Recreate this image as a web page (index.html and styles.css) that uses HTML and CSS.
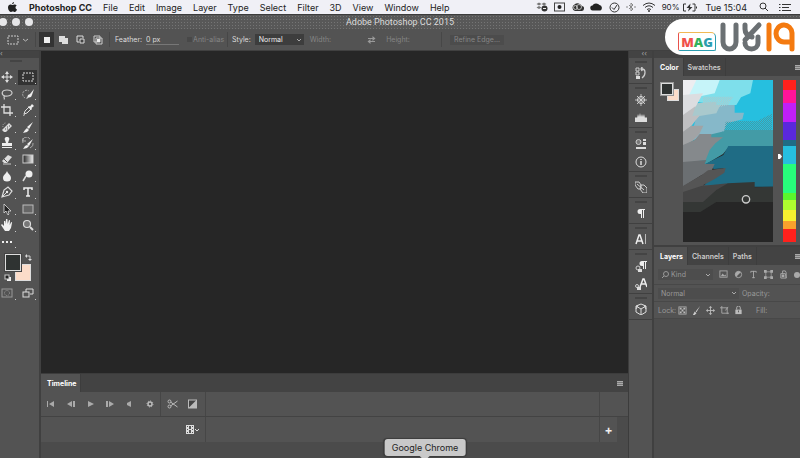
FILE: index.html
```html
<!DOCTYPE html>
<html lang="en">
<head>
    <meta charset="UTF-8">
    <meta name="viewport" content="width=device-width, initial-scale=1.0">
    <title>Adobe Photoshop CC 2015</title>
    <link rel="stylesheet" href="styles.css">
</head>
<body>
    <!-- System menu bar -->
    <header class="menubar">
        <nav class="menu">
            <a href="#" class="apple" aria-label="Apple menu"><svg width="9" height="10" viewBox="0 0 18 20"><path fill="#222" d="M12 0c0 3-2 4.500-4 4.500C8 2 10 .3 12 0zM5 5c2 0 2.500 1 4 1s2.500-1 4.500-1c1.500 0 3 .8 3.800 2-3.500 2-3 6.500.7 8-1 2.500-2.700 5-4.500 5-1.500 0-2-1-4-1s-2.500 1-4 1C3 20 0 15.500 0 11c0-4 2.500-6 5-6z"/></svg></a>
            <a href="#" class="app">Photoshop CC</a>
            <a href="#">File</a>
            <a href="#">Edit</a>
            <a href="#">Image</a>
            <a href="#">Layer</a>
            <a href="#">Type</a>
            <a href="#">Select</a>
            <a href="#">Filter</a>
            <a href="#">3D</a>
            <a href="#">View</a>
            <a href="#">Window</a>
            <a href="#">Help</a>
        </nav>
        <div class="status">
            <svg width="12" height="10" viewBox="0 0 24 20"><path fill="#777" d="M6 1l5 3-5 3-5-3zM16 1l5 3-5 3-5-3zM6 8l5 3-5 3-5-3z"/><circle cx="17" cy="13" r="6" fill="#333"/><path d="M14 13h6" stroke="#eee" stroke-width="2"/></svg>
            <svg width="11" height="10" viewBox="0 0 22 20"><rect x="1" y="2" width="20" height="16" fill="none" stroke="#444" stroke-width="2"/><circle cx="11" cy="10" r="4" fill="#222"/></svg>
            <svg width="13" height="10" viewBox="0 0 26 20"><path d="M8 18a7 7 0 0 1-1-13 9 8 0 0 1 15 3 5 5 0 0 1-2 10z" fill="#333"/><circle cx="9" cy="11" r="4" fill="none" stroke="#ddd" stroke-width="1.500"/><circle cx="16" cy="10" r="5" fill="none" stroke="#ddd" stroke-width="1.500"/></svg>
            <svg width="13" height="10" viewBox="0 0 26 20"><path d="M6 17a5 5 0 0 1-1-10 8 7 0 0 1 14-1 6 6 0 0 1 2 11z" fill="#222"/></svg>
            <svg width="11" height="11" viewBox="0 0 22 22"><circle cx="11" cy="11" r="9" fill="none" stroke="#333" stroke-width="2"/><path d="M6 11l4 4 6-9" fill="none" stroke="#333" stroke-width="2"/></svg>
            <svg width="10" height="10" viewBox="0 0 20 20"><path d="M6 6l8 8-4 4V2l4 4-8 8M2 8v4M18 8v4" fill="none" stroke="#888" stroke-width="2"/></svg>
            <svg width="14" height="10" viewBox="0 0 28 20"><path d="M2 7q12-10 24 0M6 11q8-7 16 0M10 15q4-3 8 0" fill="none" stroke="#333" stroke-width="2"/><circle cx="14" cy="18" r="2" fill="#333"/></svg>
            <span class="battery">90%<svg width="16" height="9" viewBox="0 0 32 18"><path d="M8 2H3v14h5M21 2h5v14h-5M29 7v4" fill="none" stroke="#333" stroke-width="2"/><path d="M17 1l-8 9h5l-2 7 9-9h-5z" fill="#333"/></svg></span>
            <span class="clock">Tue 15:04</span>
            <svg class="search-icon" width="10" height="10" viewBox="0 0 20 20"><circle cx="8" cy="8" r="6" fill="none" stroke="#333" stroke-width="2"/><path d="M12 12l6 6" stroke="#333" stroke-width="2"/></svg>
            <svg class="list-icon" width="12" height="9" viewBox="0 0 24 18"><path d="M0 3h3M0 9h3M0 15h3M6 3h18M6 9h14M6 15h18" stroke="#333" stroke-width="2"/></svg>
        </div>
    </header>

    <!-- Window title -->
    <div class="titlebar">
        <div class="lights"><span></span><span></span><span></span></div>
        <h1>Adobe Photoshop CC 2015</h1>
    </div>

    <!-- Tool options -->
    <form class="options">
        <div class="group tool-pick">
            <svg width="12" height="10" viewBox="0 0 12 10"><rect x="1" y="1" width="10" height="8" fill="none" stroke="#ccc" stroke-dasharray="2 1"/></svg>
            <svg width="5" height="4" viewBox="0 0 5 4"><path d="M0 1l2.500 2L5 1" fill="none" stroke="#bbb"/></svg>
        </div>
        <div class="group modes">
            <button type="button" class="active" aria-label="New selection"><svg width="10" height="10" viewBox="0 0 10 10"><rect x="2" y="2" width="6" height="6" fill="#eee"/></svg></button>
            <button type="button" aria-label="Add to selection"><svg width="10" height="10" viewBox="0 0 10 10"><path d="M0 1h6v2h3v6H3V7H0z" fill="#ddd"/></svg></button>
            <button type="button" aria-label="Subtract from selection"><svg width="10" height="10" viewBox="0 0 10 10"><path d="M3 7H1V1h6v2" fill="none" stroke="#ddd"/><path d="M4 4h4v4H4z" fill="#444" stroke="#ddd"/></svg></button>
            <button type="button" aria-label="Intersect with selection"><svg width="10" height="10" viewBox="0 0 10 10"><path d="M1 1h6v6H1zM3 3h6v6H3z" fill="none" stroke="#ccc"/><rect x="4" y="4" width="3" height="3" fill="#eee"/></svg></button>
        </div>
        <div class="group feather">
            <label for="feather">Feather:</label>
            <input type="text" id="feather" value="0 px">
            <input type="checkbox" id="alias" disabled>
            <label for="alias" class="dim">Anti-alias</label>
        </div>
        <div class="group style-group">
            <label for="style">Style:</label>
            <select id="style"><option>Normal</option><option>Fixed Ratio</option></select>
            <label for="sel-width" class="dim width-label">Width:</label>
            <input type="text" id="sel-width" class="size" disabled>
            <svg width="9" height="8" viewBox="0 0 18 16"><path d="M2 5h11M16 11H5" stroke="#999" stroke-width="2"/><path d="M11 0l6 5-6 5zM7 6l-6 5 6 5z" fill="#999"/></svg>
            <label for="sel-height" class="dim height-label">Height:</label>
            <input type="text" id="sel-height" class="size last" disabled>
        </div>
        <button type="button" class="refine" disabled>Refine Edge...</button>
    </form>

    <!-- Site logo over the top right corner -->
    <div class="logo">
        <span class="mag"><b class="m">M</b><b class="a">A</b><b class="g">G</b></span>
        <svg width="84" height="36" viewBox="0 0 84 36" fill="none" stroke-width="5" stroke-linecap="round">
            <path stroke="#6b7073" d="M7 6v17a6.500 7 0 0 0 13 0V6"/>
            <path stroke="#6b7073" d="M29 6v4q0 6 7 8M29 24a6.500 6 0 0 0 13 0v-6M43 6L29 21"/>
            <path stroke="#f47a10" d="M53 6v24M76 30V14a8 8.500 0 1 0-8 9h6"/>
        </svg>
    </div>

    <main class="workspace">
        <!-- Toolbox -->
        <aside class="toolbox">
            <div class="strip">‹</div>
            <div class="grip"></div>
            <div class="tools">
                <button aria-label="Move"><svg viewBox="0 0 12 12"><path d="M6 1v10M1 6h10" stroke="#ddd"/><path d="M6 0l2 3H4zM6 12l2-3H4zM0 6l3-2v4zM12 6L9 4v4z" fill="#ddd"/></svg></button>
                <button class="active" aria-label="Marquee"><svg viewBox="0 0 12 12"><rect x="1" y="2" width="10" height="8" fill="none" stroke="#ddd" stroke-dasharray="2 1"/></svg></button>
                <button aria-label="Lasso"><svg viewBox="0 0 12 12"><path d="M4 8C0 7 0 2 6 2s7 5 1 6c-2 .4-4-.5-4 1s1 1 0 2.500" fill="none" stroke="#ccc" stroke-width="1.200"/></svg></button>
                <button aria-label="Quick selection"><svg viewBox="0 0 12 12"><path d="M6 10A4 4 0 1 1 7 3" fill="none" stroke="#aaa" stroke-dasharray="2 1"/><path d="M12 1L8 6 6 7l-1 3 4-1 1-2z" fill="#eee"/></svg></button>
                <button aria-label="Crop"><svg viewBox="0 0 12 12"><path d="M3 0v9h9M0 3h9v9" fill="none" stroke="#ddd" stroke-width="1.300"/></svg></button>
                <button aria-label="Eyedropper"><svg viewBox="0 0 12 12"><path d="M2 10l1-3 4-4 2 2-4 4z" fill="none" stroke="#ddd"/><path d="M6 3l3 3 1-1-.5-1L12 2 10 0 8 2.500 7 2zM1 12l1-2 1 1z" fill="#eee"/></svg></button>
                <button aria-label="Healing brush"><svg viewBox="0 0 12 12"><path d="M3 11L1 9l7-7 3 3-6 6z" fill="#ddd"/><path d="M4 8h1M6 6h1M6 8h1M8 5h1" stroke="#555"/><path d="M2 6a3 3 0 0 1 3-4" fill="none" stroke="#aaa" stroke-dasharray="1"/></svg></button>
                <button aria-label="Brush"><svg viewBox="0 0 12 12"><path d="M11 1L7 8 5 6zM5 7l2 2-2 2-4 1 2-3z" fill="#eee"/></svg></button>
                <button aria-label="Clone stamp"><svg viewBox="0 0 12 12"><path d="M6 0a2 2 0 0 1 2 3L7 6h4v3H1V6h4L4 3a2 2 0 0 1 2-3zM1 10h10v1H1z" fill="#eee"/></svg></button>
                <button aria-label="History brush"><svg viewBox="0 0 12 12"><path d="M11 2L7 9 5 7zM5 8l2 1-2 2-4 1 2-3z" fill="#eee"/><path d="M1 6a4 4 0 0 1 7-4M1 1v3h3M11 6q1 3-3 5" fill="none" stroke="#aaa"/></svg></button>
                <button aria-label="Eraser"><svg viewBox="0 0 12 12"><path d="M1 8l6-6 4 2-5 6H3z" fill="#ddd"/><path d="M3 6l3 3M1 11h10" stroke="#555"/><path d="M2 11h8" stroke="#ccc"/></svg></button>
                <button aria-label="Gradient"><svg viewBox="0 0 12 12"><defs><linearGradient id="grad"><stop stop-color="#222"/><stop offset="1" stop-color="#eee"/></linearGradient></defs><rect x="1" y="2" width="10" height="8" fill="url(#grad)" stroke="#ccc"/></svg></button>
                <button aria-label="Blur"><svg viewBox="0 0 12 12"><path d="M6 1c1 3 4 4 4 7a4 3.500 0 0 1-8 0c0-3 3-4 4-7z" fill="#eee"/></svg></button>
                <button aria-label="Dodge"><svg viewBox="0 0 12 12"><circle cx="7" cy="4" r="3.500" fill="#eee"/><path d="M4 6l-3 5" stroke="#ddd" stroke-width="1.500"/></svg></button>
                <button aria-label="Pen"><svg viewBox="0 0 12 12"><path d="M1 11l2-7 4-3 4 4-3 4z" fill="none" stroke="#ddd" stroke-width="1.200"/><path d="M1 11l5-5" stroke="#ddd"/><circle cx="6" cy="6" r="1.200" fill="#eee"/></svg></button>
                <button aria-label="Type"><svg viewBox="0 0 12 12"><path d="M2 4V2h8v2M6 2v8M4 10h4" fill="none" stroke="#eee" stroke-width="1.500"/></svg></button>
                <button aria-label="Path selection"><svg viewBox="0 0 12 12"><path d="M3 1v9l2-2 2 4 1-1-1-3h3z" fill="#222" stroke="#ddd" stroke-width=".8"/></svg></button>
                <button aria-label="Rectangle"><svg viewBox="0 0 12 12"><rect x="1" y="2" width="10" height="8" fill="#666" stroke="#bbb"/></svg></button>
                <button aria-label="Hand"><svg viewBox="0 0 12 12"><path d="M4 12L0 6l1-1 2 2V2h1.200l.5 3L5 0h1.400l.3 5L8 1l1 .3L8.700 6l1.500-3 .9.400L10 9l-2 3z" fill="#eee"/></svg></button>
                <button aria-label="Zoom"><svg viewBox="0 0 12 12"><circle cx="5" cy="5" r="3.500" fill="#777" stroke="#ddd" stroke-width="1.200"/><path d="M8 8l3 3" stroke="#ddd" stroke-width="2"/></svg></button>
                <button aria-label="More tools"><svg viewBox="0 0 12 12"><path d="M1 6h2M5 6h2M9 6h2" stroke="#eee" stroke-width="2"/></svg></button>
            </div>
            <div class="tool-colors">
                <button class="bg" aria-label="Background colour"></button>
                <button class="fg" aria-label="Foreground colour"></button>
                <svg class="swap" width="7" height="7" viewBox="0 0 7 7"><path d="M1 2h4v4" fill="none" stroke="#ccc"/><path d="M0 2l2-2v4zM5 7L3 5h4z" fill="#ddd"/></svg>
                <svg class="reset" width="7" height="7" viewBox="0 0 7 7"><rect x="3" y="3" width="4" height="4" fill="#eee"/><rect x="1" y="1" width="4" height="4" fill="#222" stroke="#ccc"/></svg>
            </div>
            <div class="tools modes-row">
                <button aria-label="Quick mask"><svg viewBox="0 0 12 12"><rect x="1" y="2" width="10" height="8" fill="none" stroke="#999"/><circle cx="6" cy="6" r="2.500" fill="none" stroke="#999" stroke-dasharray="1"/></svg></button>
                <button aria-label="Screen mode"><svg viewBox="0 0 12 12"><path d="M4 5V2h7v5H8" fill="none" stroke="#ddd"/><rect x="1" y="5" width="6" height="5" fill="#555" stroke="#ddd"/></svg></button>
            </div>
        </aside>

        <section class="center">
            <div class="canvas"></div>
            <!-- Timeline -->
            <div class="timeline">
                <div class="tabs">
                    <button class="tab active">Timeline</button>
                    <span class="burger"></span>
                </div>
                <div class="track controls">
                    <div class="playback">
                        <button aria-label="First frame"><svg viewBox="0 0 10 8"><path d="M1 1h1v6H1zM8 1v6L3 4z"/></svg></button>
                        <button aria-label="Previous frame"><svg viewBox="0 0 10 8"><path d="M6 1v6L1 4zM7 1h2v6H7z"/></svg></button>
                        <button aria-label="Play"><svg viewBox="0 0 10 8"><path d="M2 1v6l6-3z"/></svg></button>
                        <button aria-label="Next frame"><svg viewBox="0 0 10 8"><path d="M4 1v6l5-3zM1 1h2v6H1z"/></svg></button>
                        <button aria-label="Mute"><svg viewBox="0 0 10 8"><path d="M2 3l4-2v6L2 5z"/></svg></button>
                        <button aria-label="Settings"><svg viewBox="0 0 10 8"><circle cx="5" cy="4" r="2" fill="none" stroke="#bbb" stroke-width="1.500"/><circle cx="5" cy="4" r="3" fill="none" stroke="#bbb" stroke-dasharray="1 1.300"/></svg></button>
                    </div>
                    <div class="edit">
                        <button aria-label="Split"><svg class="big" viewBox="0 0 10 10"><path d="M3 3l7 5M3 7l7-5" stroke="#bbb"/><circle cx="2" cy="2.500" r="1.500" fill="none" stroke="#bbb"/><circle cx="2" cy="7.500" r="1.500" fill="none" stroke="#bbb"/></svg></button>
                        <button aria-label="Transition"><svg class="big" viewBox="0 0 10 10"><rect x="1" y="1" width="8" height="8" fill="#444" stroke="#bbb"/><path d="M9 1v8H1z"/></svg></button>
                    </div>
                    <div class="rest"></div>
                    <div class="end"></div>
                </div>
                <div class="track media">
                    <div class="head">
                        <button aria-label="Add media"><svg width="13" height="9" viewBox="0 0 13 9"><path d="M0 0h8v9H0z" fill="#ddd"/><path d="M3 1h2v3H3zM3 5h2v3H3zM1 1h1v1H1zM1 4h1v1H1zM1 7h1v1H1zM6 1h1v1H6zM6 4h1v1H6zM6 7h1v1H6z" fill="#555"/><path d="M9 4l2 2 2-2" fill="none" stroke="#ddd"/></svg></button>
                    </div>
                    <div class="rest"></div>
                    <div class="end"><button aria-label="Add track">+</button></div>
                </div>
                <div class="foot"></div>
            </div>
        </section>

        <!-- Collapsed panels -->
        <aside class="dock">
            <div class="strip">‹‹</div>
            <div class="cell"><button aria-label="History"><svg viewBox="0 0 12 12"><path d="M1 1h3v3H1zM1 5h3v3H1z" fill="none" stroke="#ccc"/><path d="M1 9h4v3H1z" fill="#ddd"/><path d="M7 2c4 0 4 6 0 9M7 0v4l-1-2z" fill="none" stroke="#ccc" stroke-width="1.300"/></svg></button></div>
            <div class="cell two">
                <button aria-label="Navigator"><svg viewBox="0 0 12 12"><circle cx="6" cy="6" r="3.500" fill="none" stroke="#ddd"/><path d="M6 0v12M0 6h12M2 2l8 8M10 2l-8 8" stroke="#ddd" stroke-width=".8"/></svg></button>
                <button aria-label="Histogram"><svg viewBox="0 0 12 12"><path d="M0 10V6l1-1 1 1 1-4 1 3 1-4 1 4 1-3 1 3 1-3 1 4 1-1 1 1v4z" fill="#ddd"/></svg></button>
            </div>
            <div class="cell two">
                <button aria-label="Properties"><svg viewBox="0 0 12 12"><circle cx="3.500" cy="4" r="2.500" fill="#777" stroke="#ccc"/><path d="M8 1h3v2H8zM8 4h3v3H8zM1 9h10v2H1z" fill="#ddd"/></svg></button>
                <button aria-label="Info"><svg viewBox="0 0 12 12"><circle cx="6" cy="6" r="5" fill="none" stroke="#ddd"/><path d="M6 5v4M6 3v1" stroke="#ddd" stroke-width="1.500"/></svg></button>
            </div>
            <div class="cell"><button aria-label="Clone source"><svg viewBox="0 0 12 12"><path d="M0 1h4l2 3v4H3L0 4zM6 4h3l3 3v5H8L5 8z" fill="none" stroke="#ccc"/><path d="M2 3l7 6" stroke="#ccc"/></svg></button></div>
            <div class="cell"><button aria-label="Paragraph"><svg viewBox="0 0 12 12"><path d="M10 2H5a2.500 2.500 0 0 0 0 5h1v4h1V3h1v8h1V3h1z" fill="#eee"/></svg></button></div>
            <div class="cell"><button aria-label="Character"><svg viewBox="0 0 12 12"><path d="M1 11l3-9h1l3 9M2.500 8h4" fill="none" stroke="#eee" stroke-width="1.500"/><path d="M10.500 1v10" stroke="#bbb"/></svg></button></div>
            <div class="cell two">
                <button aria-label="Paragraph styles"><svg viewBox="0 0 12 12"><path d="M12 1H7a2.500 2.500 0 0 0 0 5h1v3h1V2h1v7h1V2h1z" fill="#eee"/><circle cx="3" cy="8" r="2" fill="none" stroke="#ccc"/><path d="M3 9h4v3H3z" fill="#ddd"/></svg></button>
                <button aria-label="Character styles"><svg viewBox="0 0 12 12"><path d="M5 9l3-8h1l3 8M6.500 6h4" fill="none" stroke="#eee" stroke-width="1.500"/><circle cx="2" cy="8" r="1.500" fill="none" stroke="#ccc"/><path d="M2 9h4v3H2z" fill="#ddd"/></svg></button>
            </div>
            <div class="cell"><button aria-label="3D"><svg viewBox="0 0 12 12"><path d="M6 1l5 2v6l-5 3-5-3V3zM1 3l5 3 5-3M6 6v6M1 6l2-4M11 6L9 2" fill="none" stroke="#ddd"/></svg></button></div>
        </aside>

        <aside class="panels">
            <div class="strip"></div>
            <section class="color-panel">
                <div class="tabs">
                    <button class="tab active">Color</button>
                    <button class="tab">Swatches</button>
                    <span class="burger"></span>
                </div>
                <div class="picker">
                    <div class="swatches">
                        <button class="bg" aria-label="Background colour"></button>
                        <button class="fg" aria-label="Foreground colour"></button>
                    </div>
                    <svg class="field" viewBox="0 0 270 486" preserveAspectRatio="none">
                        <defs>
                            <pattern id="dither" width="6" height="6" patternUnits="userSpaceOnUse"><path d="M0 0h3v3H0zM3 3h3v3H3z" fill="#439ba6"/></pattern>
                            <pattern id="dither-light" width="6" height="6" patternUnits="userSpaceOnUse"><path d="M0 0h3v3H0zM3 3h3v3H3z" fill="#a9c9cd"/></pattern>
                        </defs>
                        <path fill="#262626" d="M0 0h270v486H0z"/>
                        <path fill="#26bfdf" d="M0 0h270v200H0z"/>
                        <path fill="#439ba6" d="M0 150h270v48H140l-20 24-50 30H0z"/>
                        <path fill="url(#dither)" d="M132 123h90l45-22v50H110z"/>
                        <path fill="#7edfeb" d="M90 0h120l-8 40-28 12-14 23h-60l-60-10z"/>
                        <path fill="#86b8c9" d="M50 75h105v23h28l-5 20-45 12-10 24-43 10-60 20z"/>
                        <path fill="url(#dither)" d="M128 125h32l-20 50-22 10-30-15 36-18z"/>
                        <path fill="#c6f4f9" d="M35 0h75L95 40 45 50 0 60z"/>
                        <path fill="#a9c9cd" d="M40 70l60-5v10h12l-12 25-50 8-40 30z"/>
                        <path fill="url(#dither-light)" d="M60 50h90l-15 25-75 18z"/>
                        <path fill="#ededf0" d="M0 0h40L20 42 0 60z"/>
                        <path fill="#dcdde0" d="M0 45l60-5-22 40L0 112z"/>
                        <path fill="#bfbfc1" d="M0 105l38-27-10 30 22-2-25 32L0 160z"/>
                        <path fill="#a1a3a5" d="M0 155l25-18h36l-12 25-20 20-29 18z"/>
                        <path fill="#85898c" d="M0 195l35-15 15-18h35v10h35l-23 18-17 20-12 30-68 10z"/>
                        <path fill="#1f6c85" d="M136 198h134v122H60l18-20 45-35-30 2-27-15 55-27z"/>
                        <path fill="#6b6f72" d="M0 246l70-6-5 12h30l-10 22-30 12-55 34z"/>
                        <path fill="#555" d="M0 318l55-32 20-15 53-7-4 14-30 20-34 18 65 2-85 22-40 20z"/>
                        <path fill="#454545" d="M0 336l55-18 80-8-20 28-45 28H0z"/>
                        <path fill="#343735" d="M0 366h60l40-36 35-20 80-4v16l55-2v46H100l-48 30H0z"/>
                        <circle cx="189" cy="358" r="11" fill="none" stroke="#ccc" stroke-width="4"/>
                    </svg>
                    <svg class="marker" width="4" height="5" viewBox="0 0 4 5"><path d="M0 0h2l2 2.500L2 5H0z" fill="#fff"/></svg>
                    <input type="range" class="hue" min="0" max="100" value="53" aria-label="Hue">
                </div>
            </section>
            <section class="layers">
                <div class="tabs">
                    <button class="tab active">Layers</button>
                    <button class="tab">Channels</button>
                    <button class="tab">Paths</button>
                    <span class="burger"></span>
                </div>
                <div class="row filter-row">
                    <span class="kind-wrap">
                        <svg width="7" height="7" viewBox="0 0 7 7"><circle cx="4" cy="3" r="2.500" fill="none" stroke="#999"/><path d="M2 5L0 7" stroke="#999"/></svg>
                        <select aria-label="Filter" disabled><option>Kind</option></select>
                    </span>
                    <svg class="ico" viewBox="0 0 10 10"><rect x="1" y="1" width="8" height="7" fill="none" stroke="#aaa"/><path d="M2 7l2-3 2 2 1-1 1 2z" fill="#aaa"/></svg>
                    <svg class="ico" viewBox="0 0 10 10"><circle cx="5" cy="5" r="3.500" fill="none" stroke="#aaa"/><path d="M7.500 2.500a3.500 3.500 0 1 0-5 5z" fill="#aaa"/></svg>
                    <svg class="ico" viewBox="0 0 10 10"><path d="M2 3V1.500h6V3M5 1v8M3.500 8.500h3" fill="none" stroke="#aaa"/></svg>
                    <svg class="ico" viewBox="0 0 10 10"><path d="M2 2h6v6H2z" fill="none" stroke="#999"/><path d="M0 0h3v3H0zM7 0h3v3H7zM0 7h3v3H0zM7 7h3v3H7z" fill="#aaa"/></svg>
                    <svg class="ico" viewBox="0 0 10 10"><path d="M2 4h5l1 5H2zM4 4V1h3l1 2v6" fill="none" stroke="#aaa"/><path d="M3 5h3v3H3z" fill="#aaa"/></svg>
                    <span class="toggle"></span>
                </div>
                <div class="row blend-row">
                    <select aria-label="Blend mode" disabled><option>Normal</option></select>
                    <label for="opacity">Opacity:</label>
                    <input type="text" id="opacity" disabled>
                </div>
                <div class="row lock-row">
                    <span>Lock:</span>
                    <svg class="ico" viewBox="0 0 10 10"><rect x="1" y="1" width="8" height="8" fill="none" stroke="#aaa"/><path d="M2 2h2v2H2zM6 2h2v2H6zM4 4h2v2H4zM2 6h2v2H2zM6 6h2v2H6z" fill="#bbb"/></svg>
                    <svg class="ico" viewBox="0 0 10 10"><path d="M9 0L5 7 4 6zM3 6l2 2-2 2H1z" fill="#ccc"/></svg>
                    <svg class="ico" viewBox="0 0 10 10"><path d="M5 1v8M1 5h8" stroke="#bbb"/><path d="M5 0l2 2H3zM5 10l2-2H3zM0 5l2-2v4zM10 5L8 3v4z" fill="#bbb"/></svg>
                    <svg class="ico" viewBox="0 0 10 10"><path d="M0 2h8v7M2 0v8h8M6 5l3-4" fill="none" stroke="#aaa"/></svg>
                    <svg class="ico" viewBox="0 0 10 10"><path d="M3 4V2a2 2 0 0 1 4 0v2" fill="none" stroke="#bbb"/><path d="M1.500 4h7v5h-7z" fill="#bbb"/><path d="M5 5v2" stroke="#555"/></svg>
                    <label for="fill">Fill:</label>
                    <input type="text" id="fill" disabled>
                </div>
                <div class="layer-list"></div>
            </section>
        </aside>
    </main>

    <div class="tooltip" role="tooltip">Google Chrome</div>
</body>
</html>
```
FILE: styles.css
```css
* {
    box-sizing: border-box;
}
body {
    margin: 0;
    height: 100vh;
    display: flex;
    flex-direction: column;
    overflow: hidden;
    position: relative;
    background: #535353;
    color: #ddd;
    font-family: Inter, "Liberation Sans", sans-serif;
    font-size: 7px;
}
button, input, select {
    font: inherit;
    color: inherit;
    background: none;
    border: none;
    padding: 0;
    margin: 0;
    border-radius: 0;
}
button {
    display: flex;
    align-items: center;
    justify-content: center;
}
svg {
    display: block;
    flex: none;
}

/* Menu bar */
.menubar {
    height: 14px;
    flex: none;
    display: flex;
    align-items: center;
    justify-content: space-between;
    padding: 0 9px 0 8px;
    background: #f0f0f6;
    color: #222;
    font-size: 9px;
    white-space: nowrap;
}
.menu, .status {
    display: flex;
    align-items: center;
}
.menu {
    gap: 11px;
}
.menu a {
    color: inherit;
    text-decoration: none;
}
.menu .app {
    font-weight: 700;
    margin-left: 1px;
}
.status {
    gap: 6px;
}
.battery {
    display: flex;
    align-items: center;
    gap: 2px;
    font-size: 8px;
}
.clock {
    margin-left: 2px;
}
.search-icon {
    margin-left: 6px;
}
.list-icon {
    margin-left: 4px;
}

/* Title bar */
.titlebar {
    height: 15px;
    flex: none;
    display: grid;
    grid-template-columns: 1fr auto 1fr;
    align-items: center;
    border-top: 1px solid #3c3c3c;
    background: #5c5c5c radial-gradient(circle, #757575 1px, #585858 1px) 0 0 / 3px 3px;
}
.titlebar h1 {
    margin: 0;
    font-family: Roboto, sans-serif;
    font-size: 9px;
    font-weight: 400;
    color: #dcdcdc;
}
.lights {
    display: flex;
    gap: 5px;
}
.lights span {
    width: 8px;
    height: 8px;
    border-radius: 50%;
    background: #e6e6e8;
}
.lights span:first-child {
    margin-left: -1px;
}

/* Options bar */
.options {
    height: 22px;
    flex: none;
    display: flex;
    align-items: center;
    margin: 0;
    border-bottom: 1px solid #404040;
    background: #535353;
    white-space: nowrap;
}
.group {
    display: flex;
    align-items: center;
    height: 15px;
    border-right: 1px solid #474747;
}
.tool-pick {
    width: 36px;
    gap: 4px;
    padding-left: 7px;
}
.modes {
    width: 74px;
    gap: 2px;
    padding-left: 3px;
}
.modes button {
    width: 15px;
    height: 15px;
}
.modes .active {
    background: #333;
}
.feather {
    width: 118px;
    gap: 4px;
    padding-left: 5px;
}
#feather {
    width: 33px;
    border-bottom: 1px solid #777;
}
#alias {
    appearance: none;
    width: 5px;
    height: 5px;
    margin-left: 4px;
    background: #484848;
}
.feather .dim {
    margin-left: -3px;
}
.dim {
    color: #858585;
}
.style-group {
    width: 214px;
    gap: 4px;
    padding-left: 4px;
}
#style {
    width: 49px;
    height: 11px;
    padding-left: 4px;
    color: #eee;
}
select {
    appearance: none;
    background: #3d3d3d url("data:image/svg+xml,%3Csvg xmlns='http://www.w3.org/2000/svg' width='6' height='4'%3E%3Cpath d='M1 1l2 2 2-2' fill='none' stroke='%23aaa'/%3E%3C/svg%3E") no-repeat right 2px center;
}
.width-label {
    margin-left: 2px;
}
.size {
    width: 28px;
}
.height-label {
    margin-left: 6px;
}
.last {
    width: 20px;
}
.refine {
    width: 54px;
    height: 10px;
    margin-left: 8px;
    background: #4c4c4c;
    color: #868686;
}

/* Logo */
.logo {
    position: absolute;
    top: 19px;
    right: 0;
    z-index: 2;
    width: 135px;
    height: 36px;
    display: flex;
    align-items: center;
    padding-left: 13px;
    border-radius: 18px 0 0 18px;
    background: #fff;
}
.mag {
    width: 38px;
    height: 19px;
    margin-top: 9px;
    display: flex;
    align-items: center;
    justify-content: center;
    border: 1px solid #2b9db0;
    border-top-color: #f1b955;
    border-left-color: #e8524c;
    border-radius: 2px 5px 2px 2px;
    font: 700 13px "Open Sans", sans-serif;
}
.m { color: #f0514b; }
.a { color: #32b15c; }
.g { color: #2b9db0; }

/* Workspace */
.workspace {
    flex: 1;
    min-height: 0;
    display: flex;
}
.strip {
    height: 7px;
    flex: none;
    background: #434343;
    color: #aaa;
    font-size: 7px;
    line-height: 6px;
}
.toolbox {
    width: 41px;
    flex: none;
    display: flex;
    flex-direction: column;
    border-right: 2px solid #404040;
    background: #535353;
}
.grip {
    width: 12px;
    height: 2px;
    margin: 2px auto 0 10px;
    background: #444;
}
.tools {
    height: 181px;
    margin-top: 7px;
    display: grid;
    grid-template-columns: 17px 19px;
    grid-auto-rows: 1fr;
    align-items: center;
    column-gap: 1px;
}
.tools button {
    height: 15px;
    position: relative;
}
.tools button:nth-child(odd) {
    padding-right: 4px;
}
.tools button:after {
    content: "";
    position: absolute;
    right: 1px;
    bottom: 1px;
    width: 1px;
    height: 1px;
    background: #ccc;
}
.tools .active {
    background: #333;
}
.tools svg {
    width: 12px;
    height: 12px;
}
.tool-colors {
    position: relative;
    height: 30px;
    margin-top: 3px;
}
.fg, .bg {
    position: absolute;
    width: 16px;
    height: 17px;
    border: 1px solid #ddd;
}
.fg {
    top: 1px;
    left: 5px;
    background: #2f3332;
    outline: 1px solid #444;
}
.bg {
    top: 11px;
    left: 15px;
    background: #fbdcc9;
}
.swap {
    position: absolute;
    top: 1px;
    left: 25px;
}
.reset {
    position: absolute;
    top: 21px;
    left: 4px;
}
.modes-row {
    height: 16px;
    margin-top: 2px;
}

/* Canvas and timeline */
.center {
    flex: 1;
    min-width: 0;
    display: flex;
    flex-direction: column;
}
.canvas {
    flex: 1;
    background: #262626;
}
.tabs {
    height: 18px;
    flex: none;
    display: flex;
    background: #434343;
}
.tab {
    padding: 0 4px;
    border-right: 1px solid #3d3d3d;
    color: #ccc;
    font-weight: 600;
}
.tab.active {
    padding: 0 4px 0 6px;
    background: #535353;
    color: #fff;
    font-weight: 700;
}
.burger {
    width: 6px;
    height: 5px;
    margin: 7px 5px auto auto;
    border-top: 1px solid #aaa;
    border-bottom: 1px solid #aaa;
    background: linear-gradient(#777 1px, #aaa 1px, #aaa 2px, #777 2px);
}
.timeline {
    flex: none;
    height: 85px;
    display: flex;
    flex-direction: column;
    border-top: 1px solid #3c3c3c;
    background: #4b4b4b;
}
.track {
    display: flex;
    height: 25px;
    border-bottom: 1px solid #434343;
    background: #535353;
}
.playback, .edit, .head {
    display: flex;
    align-items: center;
    border-right: 1px solid #464646;
}
.playback {
    width: 120px;
}
.playback button {
    width: 20px;
}
.playback svg {
    width: 10px;
    height: 8px;
    fill: #aaa;
}
.edit {
    width: 45px;
    gap: 9px;
    padding-left: 6px;
}
.big {
    width: 11px;
    height: 10px;
    fill: #bbb;
}
.head {
    width: 165px;
    justify-content: flex-end;
    padding-right: 6px;
}
.rest {
    flex: 1;
}
.end {
    width: 29px;
    border-left: 1px solid #464646;
}
.media .end {
    width: 18px;
    display: flex;
    align-items: center;
    justify-content: center;
    font-size: 12px;
    font-weight: 700;
    color: #eee;
}
.media {
    margin-right: 11px;
    border-bottom: none;
}
.foot {
    flex: 1;
}

/* Collapsed dock */
.dock {
    width: 26px;
    flex: none;
    display: flex;
    flex-direction: column;
    border-left: 1px solid #3c3c3c;
    border-right: 2px solid #404040;
}
.dock .strip {
    padding-right: 5px;
    text-align: right;
}
.cell {
    height: 26px;
    flex: none;
    display: flex;
    flex-direction: column;
    align-items: center;
    justify-content: flex-end;
    gap: 6px;
    padding-bottom: 4px;
    border-bottom: 1px solid #404040;
    background: linear-gradient(#444, #444) no-repeat center 3px / 12px 2px;
}
.cell.two {
    height: 44px;
    padding-bottom: 3px;
}
.cell svg {
    width: 12px;
    height: 12px;
}

/* Right panels */
.panels {
    width: 146px;
    flex: none;
    display: flex;
    flex-direction: column;
}
.panels .burger {
    margin-right: -1px;
}
.color-panel {
    flex: none;
    border-bottom: 2px solid #404040;
}
.picker {
    display: flex;
    align-items: flex-start;
    padding: 4px 4px 3px 6px;
}
.swatches {
    position: relative;
    width: 23px;
    height: 22px;
}
.swatches .fg, .swatches .bg {
    width: 12px;
    height: 12px;
}
.swatches .fg {
    top: 3px;
    left: 1px;
    outline-color: #999;
}
.swatches .bg {
    top: 9px;
    left: 7px;
}
.field {
    flex: 1;
    height: 162px;
}
.marker {
    margin: 74px 1px 0 5px;
}
.hue {
    appearance: none;
    writing-mode: vertical-lr;
    width: 13px;
    height: 162px;
    background: linear-gradient(#ff211c 6%, #ff1499 6% 14%, #c01ff8 14% 26%, #5a28dc 26% 37%, #1f6c85 37% 41%, #26bfdf 41% 52%, #27fd7b 52% 70%, #5bf52c 70% 74%, #aefc2f 74% 80%, #f7f12f 80% 87%, #f9a12c 87% 92%, #ff211c 92%);
}
.hue::-webkit-slider-thumb {
    appearance: none;
    width: 13px;
    height: 2px;
}
.layers {
    flex: 1;
    display: flex;
    flex-direction: column;
    color: #999;
}
.row {
    height: 17px;
    display: flex;
    align-items: center;
    padding-left: 4px;
    border-bottom: 1px solid #484848;
    overflow: hidden;
}
.row label {
    white-space: nowrap;
}
.row select {
    height: 11px;
    background-color: #4d4d4d;
    opacity: 1;
}
.ico {
    width: 9px;
    height: 9px;
}
.filter-row {
    height: 20px;
    gap: 6px;
}
.kind-wrap {
    display: flex;
    align-items: center;
    width: 56px;
    padding-left: 4px;
    background: #4d4d4d;
}
.kind-wrap select {
    flex: 1;
    padding-left: 2px;
}
.toggle {
    flex: none;
    width: 6px;
    height: 6px;
    border-radius: 50%;
    background: #aaa;
}
.blend-row {
    gap: 3px;
}
.blend-row select {
    width: 81px;
    padding-left: 3px;
}
.blend-row input, .lock-row input {
    flex: 1;
    min-width: 0;
}
.lock-row {
    gap: 5px;
}
.lock-row span {
    margin-right: -3px;
}
.lock-row label {
    margin-left: 8px;
}
.layer-list {
    flex: 1;
    background: #4d4d4d;
}

/* Dock tooltip */
.tooltip {
    position: absolute;
    left: 425px;
    bottom: 2px;
    transform: translateX(-50%);
    padding: 3px 7px;
    border-radius: 3px;
    background: #c9c9c9;
    color: #222;
    font-size: 9px;
    line-height: 11px;
    white-space: nowrap;
    box-shadow: 0 0 1px 1px #3c3c3c;
}
.tooltip:after {
    content: "";
    position: absolute;
    top: 100%;
    left: 50%;
    margin-left: -5px;
    border: 5px solid transparent;
    border-top-color: #c9c9c9;
}
```
